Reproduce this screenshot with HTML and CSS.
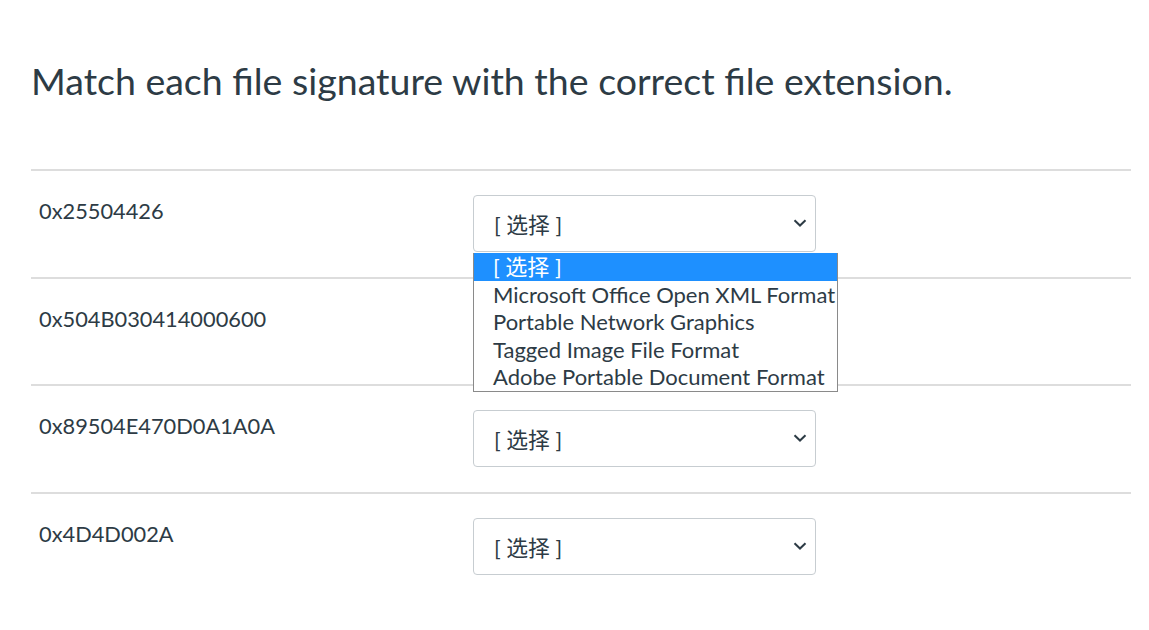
FILE: index.html
```html
<!DOCTYPE html>
<html lang="zh">
<head>
<meta charset="utf-8">
<link rel="stylesheet" href="styles.css">
</head>
<body>
<div class="page">
  <h1 class="question">Match each file signature with the correct file extension.</h1>
  <div class="answers">
    <div class="row">
      <div class="label">0x25504426</div>
      <div class="field">
        <div class="select">[ 选择 ]<svg class="chev" width="14" height="8" viewBox="0 0 14 8"><path d="M1.5 1.2 L7 6.5 L12.5 1.2" fill="none" stroke="#2d3b45" stroke-width="2"/></svg></div>
        <ul class="listbox">
          <li class="opt active">[ 选择 ]</li>
          <li class="opt">Microsoft Office Open XML Format</li>
          <li class="opt">Portable Network Graphics</li>
          <li class="opt">Tagged Image File Format</li>
          <li class="opt">Adobe Portable Document Format</li>
        </ul>
      </div>
    </div>
    <div class="row">
      <div class="label">0x504B030414000600</div>
      <div class="field">
        <div class="select">[ 选择 ]<svg class="chev" width="14" height="8" viewBox="0 0 14 8"><path d="M1.5 1.2 L7 6.5 L12.5 1.2" fill="none" stroke="#2d3b45" stroke-width="2"/></svg></div>
      </div>
    </div>
    <div class="row">
      <div class="label">0x89504E470D0A1A0A</div>
      <div class="field">
        <div class="select">[ 选择 ]<svg class="chev" width="14" height="8" viewBox="0 0 14 8"><path d="M1.5 1.2 L7 6.5 L12.5 1.2" fill="none" stroke="#2d3b45" stroke-width="2"/></svg></div>
      </div>
    </div>
    <div class="row">
      <div class="label">0x4D4D002A</div>
      <div class="field">
        <div class="select">[ 选择 ]<svg class="chev" width="14" height="8" viewBox="0 0 14 8"><path d="M1.5 1.2 L7 6.5 L12.5 1.2" fill="none" stroke="#2d3b45" stroke-width="2"/></svg></div>
      </div>
    </div>
  </div>
</div>
</body>
</html>
```
FILE: styles.css
```css
html, body {
  margin: 0;
  padding: 0;
  background: #fff;
}
body {
  font-family: Lato, "Noto Sans CJK SC", sans-serif;
  color: #2d3b45;
}
.page {
  padding: 0 18px 0 31px;
  width: 1100px;
}
.question {
  font-weight: 400;
  font-size: 37.5px;
  line-height: 46px;
  margin: 0;
  padding-top: 58px;
  padding-bottom: 65px;
}
.answers {
  display: flex;
  flex-direction: column;
}
.row {
  display: flex;
  box-sizing: border-box;
  border-top: 2px solid #dddddd;
  height: 107.7px;
}
.label {
  width: 442px;
  padding-left: 8px;
  padding-top: 27px;
  font-size: 21.8px;
  line-height: 26px;
  box-sizing: border-box;
}
.field {
  position: relative;
  padding-top: 24px;
}
.select {
  box-sizing: border-box;
  width: 343px;
  height: 57px;
  border: 1px solid #c7cdd1;
  border-radius: 4px;
  display: flex;
  align-items: center;
  justify-content: space-between;
  padding: 0 8px 0 20px;
  font-size: 21.8px;
  background: #fff;
}
.chev {
  display: block;
  margin-top: -2px;
}
.listbox {
  position: absolute;
  left: 0;
  top: 82px;
  margin: 0;
  padding: 0;
  list-style: none;
  width: 365px;
  box-sizing: border-box;
  border: 1px solid #8a8a8a;
  border-top: 0;
  background: #fff;
  z-index: 5;
}
.opt {
  height: 27.6px;
  line-height: 27.6px;
  padding-left: 19px;
  font-size: 22px;
  white-space: nowrap;
  color: #2d3b45;
}
.opt.active {
  background: #1e90ff;
  color: #fff;
}
```
